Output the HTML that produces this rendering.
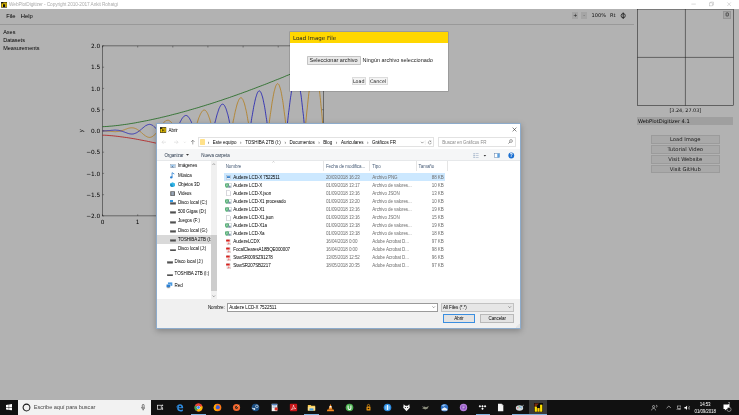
<!DOCTYPE html>
<html lang="es"><head><meta charset="utf-8"><title>WebPlotDigitizer</title>
<style>
html,body{margin:0;padding:0;}
body{width:739px;height:415px;overflow:hidden;background:#fff;position:relative;font-family:"Liberation Sans",sans-serif;color:#000;}
.abs{position:absolute;white-space:nowrap;}
.t{position:absolute;white-space:nowrap;line-height:1;}
/* title bar */
#titlebar{position:absolute;left:0;top:0;width:739px;height:9px;background:#fff;}
#titlebar .tt{left:9px;top:2.5px;font-size:4.75px;color:#ababab;letter-spacing:-0.08px;}
/* app */
#app{position:absolute;left:0;top:8.6px;width:739px;height:391px;background:#fff;overflow:hidden;}
#dim{position:absolute;left:0;top:8.6px;width:739px;height:391px;background:rgba(0,0,0,0.3);}
.plot{position:absolute;left:0;top:-8.6px;}
.menu{font-size:5.8px;}
.side{font-size:5.5px;}
.dv{font-family:"DejaVu Sans","Liberation Sans",sans-serif;}
.wbtn{position:absolute;left:650.5px;width:69.5px;height:8.4px;box-sizing:border-box;border:0.5px solid #dedede;background:#f2f2f2;color:#2a2a2a;font-size:5.25px;text-align:center;line-height:7px;}
#abrir .g{color:#6d6d6d}
#abrir .cv{display:inline-block;width:8.6px;text-align:center;color:#555;font-size:4.6px}
/* taskbar */
#taskbar{position:absolute;left:0;top:399.6px;width:739px;height:15.4px;background:#111;}
#wrap{position:absolute;left:0;top:0;width:739px;height:415px;overflow:hidden;filter:blur(0.3px);}
</style></head><body><div id="wrap">

<div id="titlebar">
  <svg class="abs" style="left:0.6px;top:2px" width="6.2" height="5.6" viewBox="0 0 13 12"><rect width="13" height="12" fill="#111"/><rect x="1" y="3" width="3" height="8" fill="#ffd400"/><rect x="5" y="1" width="3" height="4" fill="#ffd400"/><rect x="9" y="1" width="3" height="10" fill="#ffd400"/></svg>
  <div class="t tt">WebPlotDigitizer - Copyright 2010-2017 Ankit Rohatgi</div>
  <svg class="abs" style="left:686px;top:0" width="53" height="9" viewBox="0 0 53 9"><g stroke="#b5b5b5" stroke-width="0.5" fill="none"><path d="M5.4 4.1h4.4"/><rect x="23.5" y="2.9" width="3" height="3"/><path d="M24.5 2.9v-0.8h3v3h-1"/><path d="M41.3 2.4l3.6 3.6M44.9 2.4l-3.6 3.6"/></g></svg>
</div>

<div id="app">
  <div class="t menu" style="left:6.2px;top:5.7px">File</div>
  <div class="t menu" style="left:20.8px;top:5.7px">Help</div>
  <div class="abs" style="left:0;top:15.4px;width:634px;height:0.5px;background:#dcdcdc"></div>
  <div class="t side" style="left:3.2px;top:21px">Axes</div>
  <div class="t side" style="left:3.2px;top:29px">Datasets</div>
  <div class="t side" style="left:3.2px;top:37.8px">Measurements</div>
  <svg class="plot" width="739" height="415" viewBox="0 0 739 415">
<rect x="102.5" y="45.9" width="220.9" height="170.0" fill="none" stroke="#2a2a2a" stroke-width="0.5"/>
<g stroke="#222" stroke-width="0.4"><line x1="102.5" y1="215.9" x2="102.5" y2="214.3"/><line x1="102.5" y1="45.9" x2="102.5" y2="47.5"/><line x1="137.7" y1="215.9" x2="137.7" y2="214.3"/><line x1="137.7" y1="45.9" x2="137.7" y2="47.5"/><line x1="172.8" y1="215.9" x2="172.8" y2="214.3"/><line x1="172.8" y1="45.9" x2="172.8" y2="47.5"/><line x1="207.9" y1="215.9" x2="207.9" y2="214.3"/><line x1="207.9" y1="45.9" x2="207.9" y2="47.5"/><line x1="243.1" y1="215.9" x2="243.1" y2="214.3"/><line x1="243.1" y1="45.9" x2="243.1" y2="47.5"/><line x1="278.2" y1="215.9" x2="278.2" y2="214.3"/><line x1="278.2" y1="45.9" x2="278.2" y2="47.5"/><line x1="313.4" y1="215.9" x2="313.4" y2="214.3"/><line x1="313.4" y1="45.9" x2="313.4" y2="47.5"/><line x1="102.5" y1="215.9" x2="104.1" y2="215.9"/><line x1="323.4" y1="215.9" x2="321.8" y2="215.9"/><line x1="102.5" y1="194.7" x2="104.1" y2="194.7"/><line x1="323.4" y1="194.7" x2="321.8" y2="194.7"/><line x1="102.5" y1="173.4" x2="104.1" y2="173.4"/><line x1="323.4" y1="173.4" x2="321.8" y2="173.4"/><line x1="102.5" y1="152.2" x2="104.1" y2="152.2"/><line x1="323.4" y1="152.2" x2="321.8" y2="152.2"/><line x1="102.5" y1="130.9" x2="104.1" y2="130.9"/><line x1="323.4" y1="130.9" x2="321.8" y2="130.9"/><line x1="102.5" y1="109.7" x2="104.1" y2="109.7"/><line x1="323.4" y1="109.7" x2="321.8" y2="109.7"/><line x1="102.5" y1="88.4" x2="104.1" y2="88.4"/><line x1="323.4" y1="88.4" x2="321.8" y2="88.4"/><line x1="102.5" y1="67.2" x2="104.1" y2="67.2"/><line x1="323.4" y1="67.2" x2="321.8" y2="67.2"/><line x1="102.5" y1="45.9" x2="104.1" y2="45.9"/><line x1="323.4" y1="45.9" x2="321.8" y2="45.9"/></g>
<g font-family="'DejaVu Sans','Liberation Sans',sans-serif" font-size="5.8" fill="#000"><text x="100.3" y="218.1" text-anchor="end">−2.0</text><text x="100.3" y="196.8" text-anchor="end">−1.5</text><text x="100.3" y="175.6" text-anchor="end">−1.0</text><text x="100.3" y="154.3" text-anchor="end">−0.5</text><text x="100.3" y="133.1" text-anchor="end">0.0</text><text x="100.3" y="111.9" text-anchor="end">0.5</text><text x="100.3" y="90.6" text-anchor="end">1.0</text><text x="100.3" y="69.4" text-anchor="end">1.5</text><text x="100.3" y="48.1" text-anchor="end">2.0</text><text x="102.5" y="223.8" text-anchor="middle">0</text><text x="137.7" y="223.8" text-anchor="middle">1</text><text x="172.8" y="223.8" text-anchor="middle">2</text><text x="207.9" y="223.8" text-anchor="middle">3</text><text x="243.1" y="223.8" text-anchor="middle">4</text><text x="278.2" y="223.8" text-anchor="middle">5</text><text x="313.4" y="223.8" text-anchor="middle">6</text>
<text x="83.5" y="130.9" text-anchor="middle" transform="rotate(-90 83.5 130.9)">y</text></g>
<g fill="none" stroke-width="0.68">
<path d="M102.5,126.7 L104.3,126.6 L106.2,126.5 L108.0,126.4 L109.9,126.2 L111.7,126.1 L113.5,125.9 L115.4,125.7 L117.2,125.5 L119.1,125.3 L120.9,125.0 L122.7,124.8 L124.6,124.5 L126.4,124.3 L128.3,124.0 L130.1,123.7 L131.9,123.4 L133.8,123.1 L135.6,122.8 L137.5,122.4 L139.3,122.1 L141.1,121.7 L143.0,121.4 L144.8,121.0 L146.7,120.7 L148.5,120.3 L150.4,119.9 L152.2,119.5 L154.0,119.1 L155.9,118.7 L157.7,118.3 L159.6,117.9 L161.4,117.4 L163.2,117.0 L165.1,116.6 L166.9,116.1 L168.8,115.7 L170.6,115.2 L172.4,114.7 L174.3,114.2 L176.1,113.8 L178.0,113.3 L179.8,112.8 L181.6,112.3 L183.5,111.8 L185.3,111.3 L187.2,110.8 L189.0,110.2 L190.8,109.7 L192.7,109.2 L194.5,108.6 L196.4,108.1 L198.2,107.6 L200.0,107.0 L201.9,106.4 L203.7,105.9 L205.6,105.3 L207.4,104.7 L209.2,104.2 L211.1,103.6 L212.9,103.0 L214.8,102.4 L216.6,101.8 L218.4,101.2 L220.3,100.6 L222.1,100.0 L224.0,99.3 L225.8,98.7 L227.7,98.1 L229.5,97.5 L231.3,96.8 L233.2,96.2 L235.0,95.5 L236.9,94.9 L238.7,94.2 L240.5,93.6 L242.4,92.9 L244.2,92.2 L246.1,91.6 L247.9,90.9 L249.7,90.2 L251.6,89.5 L253.4,88.8 L255.3,88.1 L257.1,87.4 L258.9,86.7 L260.8,86.0 L262.6,85.3 L264.5,84.6 L266.3,83.9 L268.1,83.2 L270.0,82.4 L271.8,81.7 L273.7,81.0 L275.5,80.2 L277.3,79.5 L279.2,78.8 L281.0,78.0 L282.9,77.3 L284.7,76.5 L286.5,75.7 L288.4,75.0 L290.2,74.2 L292.1,73.4 L293.9,72.6 L295.7,71.9 L297.6,71.1 L299.4,70.3 L301.3,69.5 L303.1,68.7 L304.9,67.9 L306.8,67.1 L308.6,66.3 L310.5,65.5 L312.3,64.7 L314.2,63.9 L316.0,63.0 L317.8,62.2 L319.7,61.4 L321.5,60.5 L323.4,59.7" stroke="#008000"/>
<path d="M102.5,135.2 L104.3,135.2 L106.2,135.3 L108.0,135.4 L109.9,135.6 L111.7,135.7 L113.5,135.9 L115.4,136.1 L117.2,136.3 L119.1,136.5 L120.9,136.8 L122.7,137.0 L124.6,137.3 L126.4,137.5 L128.3,137.8 L130.1,138.1 L131.9,138.4 L133.8,138.7 L135.6,139.0 L137.5,139.4 L139.3,139.7 L141.1,140.1 L143.0,140.4 L144.8,140.8 L146.7,141.1 L148.5,141.5 L150.4,141.9 L152.2,142.3 L154.0,142.7 L155.9,143.1 L157.7,143.5 L159.6,143.9 L161.4,144.4 L163.2,144.8 L165.1,145.2 L166.9,145.7 L168.8,146.1 L170.6,146.6 L172.4,147.1 L174.3,147.6 L176.1,148.0 L178.0,148.5 L179.8,149.0 L181.6,149.5 L183.5,150.0 L185.3,150.5 L187.2,151.0 L189.0,151.6 L190.8,152.1 L192.7,152.6 L194.5,153.2 L196.4,153.7 L198.2,154.2 L200.0,154.8 L201.9,155.4 L203.7,155.9 L205.6,156.5 L207.4,157.1 L209.2,157.6 L211.1,158.2 L212.9,158.8 L214.8,159.4 L216.6,160.0 L218.4,160.6 L220.3,161.2 L222.1,161.8 L224.0,162.5 L225.8,163.1 L227.7,163.7 L229.5,164.3 L231.3,165.0 L233.2,165.6 L235.0,166.3 L236.9,166.9 L238.7,167.6 L240.5,168.2 L242.4,168.9 L244.2,169.6 L246.1,170.2 L247.9,170.9 L249.7,171.6 L251.6,172.3 L253.4,173.0 L255.3,173.7 L257.1,174.4 L258.9,175.1 L260.8,175.8 L262.6,176.5 L264.5,177.2 L266.3,177.9 L268.1,178.6 L270.0,179.4 L271.8,180.1 L273.7,180.8 L275.5,181.6 L277.3,182.3 L279.2,183.0 L281.0,183.8 L282.9,184.5 L284.7,185.3 L286.5,186.1 L288.4,186.8 L290.2,187.6 L292.1,188.4 L293.9,189.2 L295.7,189.9 L297.6,190.7 L299.4,191.5 L301.3,192.3 L303.1,193.1 L304.9,193.9 L306.8,194.7 L308.6,195.5 L310.5,196.3 L312.3,197.1 L314.2,197.9 L316.0,198.8 L317.8,199.6 L319.7,200.4 L321.5,201.3 L323.4,202.1" stroke="#ff0000"/>
<path d="M102.5,130.9 L102.8,130.9 L103.1,130.9 L103.4,130.9 L103.8,130.9 L104.1,130.9 L104.4,130.9 L104.7,130.9 L105.0,130.9 L105.3,130.9 L105.7,131.0 L106.0,131.0 L106.3,131.0 L106.6,131.0 L106.9,131.0 L107.2,131.1 L107.5,131.1 L107.9,131.1 L108.2,131.1 L108.5,131.2 L108.8,131.2 L109.1,131.2 L109.4,131.2 L109.8,131.3 L110.1,131.3 L110.4,131.3 L110.7,131.4 L111.0,131.4 L111.3,131.4 L111.6,131.5 L112.0,131.5 L112.3,131.5 L112.6,131.5 L112.9,131.6 L113.2,131.6 L113.5,131.6 L113.9,131.6 L114.2,131.6 L114.5,131.7 L114.8,131.7 L115.1,131.7 L115.4,131.7 L115.8,131.7 L116.1,131.6 L116.4,131.6 L116.7,131.6 L117.0,131.6 L117.3,131.6 L117.6,131.5 L118.0,131.5 L118.3,131.5 L118.6,131.4 L118.9,131.4 L119.2,131.3 L119.5,131.2 L119.9,131.2 L120.2,131.1 L120.5,131.0 L120.8,130.9 L121.1,130.8 L121.4,130.7 L121.7,130.7 L122.1,130.6 L122.4,130.5 L122.7,130.3 L123.0,130.2 L123.3,130.1 L123.6,130.0 L124.0,129.9 L124.3,129.8 L124.6,129.7 L124.9,129.5 L125.2,129.4 L125.5,129.3 L125.8,129.2 L126.2,129.1 L126.5,129.0 L126.8,128.8 L127.1,128.7 L127.4,128.6 L127.7,128.5 L128.1,128.4 L128.4,128.3 L128.7,128.2 L129.0,128.2 L129.3,128.1 L129.6,128.0 L129.9,128.0 L130.3,127.9 L130.6,127.9 L130.9,127.8 L131.2,127.8 L131.5,127.8 L131.8,127.8 L132.2,127.8 L132.5,127.8 L132.8,127.9 L133.1,127.9 L133.4,127.9 L133.7,128.0 L134.1,128.1 L134.4,128.2 L134.7,128.3 L135.0,128.4 L135.3,128.5 L135.6,128.6 L135.9,128.8 L136.3,128.9 L136.6,129.1 L136.9,129.2 L137.2,129.4 L137.5,129.6 L137.8,129.8 L138.2,130.0 L138.5,130.3 L138.8,130.5 L139.1,130.7 L139.4,131.0 L139.7,131.2 L140.0,131.5 L140.4,131.7 L140.7,132.0 L141.0,132.3 L141.3,132.5 L141.6,132.8 L141.9,133.1 L142.3,133.4 L142.6,133.6 L142.9,133.9 L143.2,134.2 L143.5,134.4 L143.8,134.7 L144.1,134.9 L144.5,135.2 L144.8,135.4 L145.1,135.6 L145.4,135.8 L145.7,136.1 L146.0,136.2 L146.4,136.4 L146.7,136.6 L147.0,136.7 L147.3,136.9 L147.6,137.0 L147.9,137.1 L148.2,137.2 L148.6,137.3 L148.9,137.3 L149.2,137.4 L149.5,137.4 L149.8,137.4 L150.1,137.3 L150.5,137.3 L150.8,137.2 L151.1,137.1 L151.4,137.0 L151.7,136.9 L152.0,136.8 L152.3,136.6 L152.7,136.4 L153.0,136.2 L153.3,136.0 L153.6,135.7 L153.9,135.4 L154.2,135.1 L154.6,134.8 L154.9,134.5 L155.2,134.2 L155.5,133.8 L155.8,133.4 L156.1,133.0 L156.5,132.6 L156.8,132.2 L157.1,131.8 L157.4,131.3 L157.7,130.9 L158.0,130.4 L158.3,130.0 L158.7,129.5 L159.0,129.0 L159.3,128.6 L159.6,128.1 L159.9,127.6 L160.2,127.2 L160.6,126.7 L160.9,126.2 L161.2,125.8 L161.5,125.3 L161.8,124.9 L162.1,124.5 L162.4,124.1 L162.8,123.7 L163.1,123.3 L163.4,122.9 L163.7,122.6 L164.0,122.2 L164.3,121.9 L164.7,121.6 L165.0,121.4 L165.3,121.1 L165.6,120.9 L165.9,120.8 L166.2,120.6 L166.5,120.5 L166.9,120.4 L167.2,120.3 L167.5,120.3 L167.8,120.3 L168.1,120.3 L168.4,120.3 L168.8,120.4 L169.1,120.6 L169.4,120.7 L169.7,120.9 L170.0,121.1 L170.3,121.4 L170.6,121.7 L171.0,122.0 L171.3,122.3 L171.6,122.7 L171.9,123.1 L172.2,123.6 L172.5,124.0 L172.9,124.5 L173.2,125.1 L173.5,125.6 L173.8,126.2 L174.1,126.8 L174.4,127.4 L174.8,128.0 L175.1,128.6 L175.4,129.3 L175.7,130.0 L176.0,130.7 L176.3,131.4 L176.6,132.1 L177.0,132.8 L177.3,133.5 L177.6,134.2 L177.9,134.9 L178.2,135.6 L178.5,136.3 L178.9,137.0 L179.2,137.7 L179.5,138.4 L179.8,139.0 L180.1,139.7 L180.4,140.3 L180.7,140.9 L181.1,141.5 L181.4,142.1 L181.7,142.6 L182.0,143.1 L182.3,143.6 L182.6,144.0 L183.0,144.4 L183.3,144.8 L183.6,145.1 L183.9,145.4 L184.2,145.7 L184.5,145.9 L184.8,146.1 L185.2,146.2 L185.5,146.3 L185.8,146.4 L186.1,146.4 L186.4,146.3 L186.7,146.2 L187.1,146.1 L187.4,145.9 L187.7,145.6 L188.0,145.4 L188.3,145.0 L188.6,144.7 L188.9,144.2 L189.3,143.8 L189.6,143.3 L189.9,142.7 L190.2,142.1 L190.5,141.5 L190.8,140.9 L191.2,140.2 L191.5,139.4 L191.8,138.6 L192.1,137.8 L192.4,137.0 L192.7,136.2 L193.1,135.3 L193.4,134.4 L193.7,133.4 L194.0,132.5 L194.3,131.5 L194.6,130.6 L194.9,129.6 L195.3,128.6 L195.6,127.6 L195.9,126.6 L196.2,125.7 L196.5,124.7 L196.8,123.7 L197.2,122.8 L197.5,121.8 L197.8,120.9 L198.1,120.0 L198.4,119.1 L198.7,118.2 L199.0,117.4 L199.4,116.6 L199.7,115.8 L200.0,115.1 L200.3,114.4 L200.6,113.8 L200.9,113.2 L201.3,112.6 L201.6,112.1 L201.9,111.7 L202.2,111.3 L202.5,110.9 L202.8,110.6 L203.1,110.4 L203.5,110.2 L203.8,110.1 L204.1,110.1 L204.4,110.1 L204.7,110.1 L205.0,110.3 L205.4,110.4 L205.7,110.7 L206.0,111.0 L206.3,111.4 L206.6,111.8 L206.9,112.3 L207.2,112.9 L207.6,113.5 L207.9,114.2 L208.2,114.9 L208.5,115.7 L208.8,116.5 L209.1,117.4 L209.5,118.3 L209.8,119.3 L210.1,120.3 L210.4,121.4 L210.7,122.4 L211.0,123.6 L211.3,124.7 L211.7,125.9 L212.0,127.1 L212.3,128.4 L212.6,129.6 L212.9,130.9 L213.2,132.2 L213.6,133.5 L213.9,134.8 L214.2,136.0 L214.5,137.3 L214.8,138.6 L215.1,139.9 L215.5,141.1 L215.8,142.4 L216.1,143.6 L216.4,144.7 L216.7,145.9 L217.0,147.0 L217.3,148.1 L217.7,149.1 L218.0,150.1 L218.3,151.0 L218.6,151.9 L218.9,152.8 L219.2,153.6 L219.6,154.3 L219.9,154.9 L220.2,155.5 L220.5,156.0 L220.8,156.5 L221.1,156.9 L221.4,157.2 L221.8,157.4 L222.1,157.6 L222.4,157.6 L222.7,157.6 L223.0,157.6 L223.3,157.4 L223.7,157.2 L224.0,156.9 L224.3,156.5 L224.6,156.0 L224.9,155.5 L225.2,154.8 L225.5,154.1 L225.9,153.4 L226.2,152.5 L226.5,151.6 L226.8,150.6 L227.1,149.6 L227.4,148.5 L227.8,147.3 L228.1,146.1 L228.4,144.8 L228.7,143.4 L229.0,142.1 L229.3,140.6 L229.6,139.2 L230.0,137.7 L230.3,136.2 L230.6,134.6 L230.9,133.0 L231.2,131.4 L231.5,129.8 L231.9,128.2 L232.2,126.6 L232.5,125.0 L232.8,123.4 L233.1,121.8 L233.4,120.2 L233.8,118.6 L234.1,117.1 L234.4,115.5 L234.7,114.1 L235.0,112.6 L235.3,111.2 L235.6,109.9 L236.0,108.6 L236.3,107.3 L236.6,106.1 L236.9,105.0 L237.2,104.0 L237.5,103.0 L237.9,102.1 L238.2,101.3 L238.5,100.5 L238.8,99.9 L239.1,99.3 L239.4,98.8 L239.7,98.4 L240.1,98.1 L240.4,97.9 L240.7,97.8 L241.0,97.8 L241.3,97.8 L241.6,98.0 L242.0,98.3 L242.3,98.7 L242.6,99.1 L242.9,99.7 L243.2,100.4 L243.5,101.1 L243.8,102.0 L244.2,102.9 L244.5,103.9 L244.8,105.0 L245.1,106.2 L245.4,107.5 L245.7,108.9 L246.1,110.3 L246.4,111.8 L246.7,113.3 L247.0,115.0 L247.3,116.6 L247.6,118.4 L247.9,120.2 L248.3,122.0 L248.6,123.8 L248.9,125.7 L249.2,127.7 L249.5,129.6 L249.8,131.6 L250.2,133.5 L250.5,135.5 L250.8,137.5 L251.1,139.4 L251.4,141.4 L251.7,143.3 L252.0,145.3 L252.4,147.1 L252.7,149.0 L253.0,150.8 L253.3,152.5 L253.6,154.3 L253.9,155.9 L254.3,157.5 L254.6,159.0 L254.9,160.5 L255.2,161.8 L255.5,163.1 L255.8,164.3 L256.2,165.4 L256.5,166.4 L256.8,167.4 L257.1,168.2 L257.4,168.9 L257.7,169.5 L258.0,170.0 L258.4,170.4 L258.7,170.7 L259.0,170.8 L259.3,170.9 L259.6,170.8 L259.9,170.6 L260.3,170.3 L260.6,169.9 L260.9,169.3 L261.2,168.7 L261.5,167.9 L261.8,167.0 L262.1,166.0 L262.5,164.9 L262.8,163.7 L263.1,162.4 L263.4,161.0 L263.7,159.5 L264.0,157.9 L264.4,156.2 L264.7,154.4 L265.0,152.6 L265.3,150.6 L265.6,148.6 L265.9,146.6 L266.2,144.5 L266.6,142.3 L266.9,140.1 L267.2,137.8 L267.5,135.5 L267.8,133.2 L268.1,130.9 L268.5,128.6 L268.8,126.2 L269.1,123.8 L269.4,121.5 L269.7,119.2 L270.0,116.9 L270.3,114.6 L270.7,112.3 L271.0,110.1 L271.3,108.0 L271.6,105.9 L271.9,103.8 L272.2,101.8 L272.6,99.9 L272.9,98.1 L273.2,96.4 L273.5,94.7 L273.8,93.2 L274.1,91.7 L274.5,90.4 L274.8,89.2 L275.1,88.1 L275.4,87.1 L275.7,86.2 L276.0,85.5 L276.3,84.8 L276.7,84.3 L277.0,84.0 L277.3,83.8 L277.6,83.7 L277.9,83.7 L278.2,83.9 L278.6,84.3 L278.9,84.7 L279.2,85.3 L279.5,86.1 L279.8,87.0 L280.1,88.0 L280.4,89.1 L280.8,90.4 L281.1,91.8 L281.4,93.3 L281.7,94.9 L282.0,96.7 L282.3,98.5 L282.7,100.5 L283.0,102.6 L283.3,104.7 L283.6,107.0 L283.9,109.3 L284.2,111.7 L284.5,114.1 L284.9,116.7 L285.2,119.3 L285.5,121.9 L285.8,124.6 L286.1,127.3 L286.4,130.0 L286.8,132.7 L287.1,135.5 L287.4,138.2 L287.7,141.0 L288.0,143.7 L288.3,146.4 L288.6,149.1 L289.0,151.7 L289.3,154.3 L289.6,156.9 L289.9,159.3 L290.2,161.7 L290.5,164.1 L290.9,166.3 L291.2,168.4 L291.5,170.5 L291.8,172.4 L292.1,174.3 L292.4,176.0 L292.7,177.6 L293.1,179.0 L293.4,180.4 L293.7,181.5 L294.0,182.6 L294.3,183.5 L294.6,184.3 L295.0,184.9 L295.3,185.3 L295.6,185.6 L295.9,185.7 L296.2,185.7 L296.5,185.5 L296.9,185.2 L297.2,184.7 L297.5,184.0 L297.8,183.2 L298.1,182.2 L298.4,181.1 L298.7,179.8 L299.1,178.4 L299.4,176.8 L299.7,175.1 L300.0,173.2 L300.3,171.2 L300.6,169.1 L301.0,166.8 L301.3,164.5 L301.6,162.0 L301.9,159.5 L302.2,156.8 L302.5,154.1 L302.8,151.2 L303.2,148.3 L303.5,145.4 L303.8,142.3 L304.1,139.3 L304.4,136.1 L304.7,133.0 L305.1,129.8 L305.4,126.7 L305.7,123.5 L306.0,120.3 L306.3,117.2 L306.6,114.0 L306.9,111.0 L307.3,107.9 L307.6,104.9 L307.9,102.0 L308.2,99.1 L308.5,96.3 L308.8,93.6 L309.2,91.0 L309.5,88.5 L309.8,86.2 L310.1,83.9 L310.4,81.8 L310.7,79.8 L311.0,77.9 L311.4,76.2 L311.7,74.6 L312.0,73.2 L312.3,72.0 L312.6,70.9 L312.9,70.0 L313.3,69.2 L313.6,68.7 L313.9,68.3 L314.2,68.1 L314.5,68.1 L314.8,68.2 L315.2,68.6 L315.5,69.1 L315.8,69.8 L316.1,70.7 L316.4,71.8 L316.7,73.0 L317.0,74.5 L317.4,76.1 L317.7,77.8 L318.0,79.7 L318.3,81.8 L318.6,84.1 L318.9,86.4 L319.3,89.0 L319.6,91.6 L319.9,94.4 L320.2,97.3 L320.5,100.3 L320.8,103.4 L321.1,106.6 L321.5,109.9 L321.8,113.3 L322.1,116.7 L322.4,120.2 L322.7,123.7 L323.0,127.3 L323.4,130.9" stroke="#ffa500"/>
<path d="M102.5,130.9 L102.8,130.9 L103.1,130.9 L103.4,130.9 L103.8,130.9 L104.1,130.9 L104.4,130.9 L104.7,130.9 L105.0,130.9 L105.3,130.9 L105.7,130.8 L106.0,130.8 L106.3,130.8 L106.6,130.8 L106.9,130.8 L107.2,130.7 L107.5,130.7 L107.9,130.7 L108.2,130.7 L108.5,130.6 L108.8,130.6 L109.1,130.6 L109.4,130.6 L109.8,130.5 L110.1,130.5 L110.4,130.5 L110.7,130.4 L111.0,130.4 L111.3,130.4 L111.6,130.3 L112.0,130.3 L112.3,130.3 L112.6,130.3 L112.9,130.2 L113.2,130.2 L113.5,130.2 L113.9,130.2 L114.2,130.2 L114.5,130.1 L114.8,130.1 L115.1,130.1 L115.4,130.1 L115.8,130.1 L116.1,130.2 L116.4,130.2 L116.7,130.2 L117.0,130.2 L117.3,130.2 L117.6,130.3 L118.0,130.3 L118.3,130.3 L118.6,130.4 L118.9,130.4 L119.2,130.5 L119.5,130.6 L119.9,130.6 L120.2,130.7 L120.5,130.8 L120.8,130.9 L121.1,131.0 L121.4,131.1 L121.7,131.1 L122.1,131.2 L122.4,131.3 L122.7,131.5 L123.0,131.6 L123.3,131.7 L123.6,131.8 L124.0,131.9 L124.3,132.0 L124.6,132.1 L124.9,132.3 L125.2,132.4 L125.5,132.5 L125.8,132.6 L126.2,132.7 L126.5,132.8 L126.8,133.0 L127.1,133.1 L127.4,133.2 L127.7,133.3 L128.1,133.4 L128.4,133.5 L128.7,133.6 L129.0,133.6 L129.3,133.7 L129.6,133.8 L129.9,133.8 L130.3,133.9 L130.6,133.9 L130.9,134.0 L131.2,134.0 L131.5,134.0 L131.8,134.0 L132.2,134.0 L132.5,134.0 L132.8,133.9 L133.1,133.9 L133.4,133.9 L133.7,133.8 L134.1,133.7 L134.4,133.6 L134.7,133.5 L135.0,133.4 L135.3,133.3 L135.6,133.2 L135.9,133.0 L136.3,132.9 L136.6,132.7 L136.9,132.6 L137.2,132.4 L137.5,132.2 L137.8,132.0 L138.2,131.8 L138.5,131.5 L138.8,131.3 L139.1,131.1 L139.4,130.8 L139.7,130.6 L140.0,130.3 L140.4,130.1 L140.7,129.8 L141.0,129.5 L141.3,129.3 L141.6,129.0 L141.9,128.7 L142.3,128.4 L142.6,128.2 L142.9,127.9 L143.2,127.6 L143.5,127.4 L143.8,127.1 L144.1,126.9 L144.5,126.6 L144.8,126.4 L145.1,126.2 L145.4,126.0 L145.7,125.7 L146.0,125.6 L146.4,125.4 L146.7,125.2 L147.0,125.1 L147.3,124.9 L147.6,124.8 L147.9,124.7 L148.2,124.6 L148.6,124.5 L148.9,124.5 L149.2,124.4 L149.5,124.4 L149.8,124.4 L150.1,124.5 L150.5,124.5 L150.8,124.6 L151.1,124.7 L151.4,124.8 L151.7,124.9 L152.0,125.0 L152.3,125.2 L152.7,125.4 L153.0,125.6 L153.3,125.8 L153.6,126.1 L153.9,126.4 L154.2,126.7 L154.6,127.0 L154.9,127.3 L155.2,127.6 L155.5,128.0 L155.8,128.4 L156.1,128.8 L156.5,129.2 L156.8,129.6 L157.1,130.0 L157.4,130.5 L157.7,130.9 L158.0,131.4 L158.3,131.8 L158.7,132.3 L159.0,132.8 L159.3,133.2 L159.6,133.7 L159.9,134.2 L160.2,134.6 L160.6,135.1 L160.9,135.6 L161.2,136.0 L161.5,136.5 L161.8,136.9 L162.1,137.3 L162.4,137.7 L162.8,138.1 L163.1,138.5 L163.4,138.9 L163.7,139.2 L164.0,139.6 L164.3,139.9 L164.7,140.2 L165.0,140.4 L165.3,140.7 L165.6,140.9 L165.9,141.0 L166.2,141.2 L166.5,141.3 L166.9,141.4 L167.2,141.5 L167.5,141.5 L167.8,141.5 L168.1,141.5 L168.4,141.5 L168.8,141.4 L169.1,141.2 L169.4,141.1 L169.7,140.9 L170.0,140.7 L170.3,140.4 L170.6,140.1 L171.0,139.8 L171.3,139.5 L171.6,139.1 L171.9,138.7 L172.2,138.2 L172.5,137.8 L172.9,137.3 L173.2,136.7 L173.5,136.2 L173.8,135.6 L174.1,135.0 L174.4,134.4 L174.8,133.8 L175.1,133.2 L175.4,132.5 L175.7,131.8 L176.0,131.1 L176.3,130.4 L176.6,129.7 L177.0,129.0 L177.3,128.3 L177.6,127.6 L177.9,126.9 L178.2,126.2 L178.5,125.5 L178.9,124.8 L179.2,124.1 L179.5,123.4 L179.8,122.8 L180.1,122.1 L180.4,121.5 L180.7,120.9 L181.1,120.3 L181.4,119.7 L181.7,119.2 L182.0,118.7 L182.3,118.2 L182.6,117.8 L183.0,117.4 L183.3,117.0 L183.6,116.7 L183.9,116.4 L184.2,116.1 L184.5,115.9 L184.8,115.7 L185.2,115.6 L185.5,115.5 L185.8,115.4 L186.1,115.4 L186.4,115.5 L186.7,115.6 L187.1,115.7 L187.4,115.9 L187.7,116.2 L188.0,116.4 L188.3,116.8 L188.6,117.1 L188.9,117.6 L189.3,118.0 L189.6,118.5 L189.9,119.1 L190.2,119.7 L190.5,120.3 L190.8,120.9 L191.2,121.6 L191.5,122.4 L191.8,123.2 L192.1,124.0 L192.4,124.8 L192.7,125.6 L193.1,126.5 L193.4,127.4 L193.7,128.4 L194.0,129.3 L194.3,130.3 L194.6,131.2 L194.9,132.2 L195.3,133.2 L195.6,134.2 L195.9,135.2 L196.2,136.1 L196.5,137.1 L196.8,138.1 L197.2,139.0 L197.5,140.0 L197.8,140.9 L198.1,141.8 L198.4,142.7 L198.7,143.6 L199.0,144.4 L199.4,145.2 L199.7,146.0 L200.0,146.7 L200.3,147.4 L200.6,148.0 L200.9,148.6 L201.3,149.2 L201.6,149.7 L201.9,150.1 L202.2,150.5 L202.5,150.9 L202.8,151.2 L203.1,151.4 L203.5,151.6 L203.8,151.7 L204.1,151.7 L204.4,151.7 L204.7,151.7 L205.0,151.5 L205.4,151.4 L205.7,151.1 L206.0,150.8 L206.3,150.4 L206.6,150.0 L206.9,149.5 L207.2,148.9 L207.6,148.3 L207.9,147.6 L208.2,146.9 L208.5,146.1 L208.8,145.3 L209.1,144.4 L209.5,143.5 L209.8,142.5 L210.1,141.5 L210.4,140.4 L210.7,139.4 L211.0,138.2 L211.3,137.1 L211.7,135.9 L212.0,134.7 L212.3,133.4 L212.6,132.2 L212.9,130.9 L213.2,129.6 L213.6,128.3 L213.9,127.0 L214.2,125.8 L214.5,124.5 L214.8,123.2 L215.1,121.9 L215.5,120.7 L215.8,119.4 L216.1,118.2 L216.4,117.1 L216.7,115.9 L217.0,114.8 L217.3,113.7 L217.7,112.7 L218.0,111.7 L218.3,110.8 L218.6,109.9 L218.9,109.0 L219.2,108.2 L219.6,107.5 L219.9,106.9 L220.2,106.3 L220.5,105.8 L220.8,105.3 L221.1,104.9 L221.4,104.6 L221.8,104.4 L222.1,104.2 L222.4,104.2 L222.7,104.2 L223.0,104.2 L223.3,104.4 L223.7,104.6 L224.0,104.9 L224.3,105.3 L224.6,105.8 L224.9,106.3 L225.2,107.0 L225.5,107.7 L225.9,108.4 L226.2,109.3 L226.5,110.2 L226.8,111.2 L227.1,112.2 L227.4,113.3 L227.8,114.5 L228.1,115.7 L228.4,117.0 L228.7,118.4 L229.0,119.7 L229.3,121.2 L229.6,122.6 L230.0,124.1 L230.3,125.6 L230.6,127.2 L230.9,128.8 L231.2,130.4 L231.5,132.0 L231.9,133.6 L232.2,135.2 L232.5,136.8 L232.8,138.4 L233.1,140.0 L233.4,141.6 L233.8,143.2 L234.1,144.7 L234.4,146.3 L234.7,147.7 L235.0,149.2 L235.3,150.6 L235.6,151.9 L236.0,153.2 L236.3,154.5 L236.6,155.7 L236.9,156.8 L237.2,157.8 L237.5,158.8 L237.9,159.7 L238.2,160.5 L238.5,161.3 L238.8,161.9 L239.1,162.5 L239.4,163.0 L239.7,163.4 L240.1,163.7 L240.4,163.9 L240.7,164.0 L241.0,164.0 L241.3,164.0 L241.6,163.8 L242.0,163.5 L242.3,163.1 L242.6,162.7 L242.9,162.1 L243.2,161.4 L243.5,160.7 L243.8,159.8 L244.2,158.9 L244.5,157.9 L244.8,156.8 L245.1,155.6 L245.4,154.3 L245.7,152.9 L246.1,151.5 L246.4,150.0 L246.7,148.5 L247.0,146.8 L247.3,145.2 L247.6,143.4 L247.9,141.6 L248.3,139.8 L248.6,138.0 L248.9,136.1 L249.2,134.1 L249.5,132.2 L249.8,130.2 L250.2,128.3 L250.5,126.3 L250.8,124.3 L251.1,122.4 L251.4,120.4 L251.7,118.5 L252.0,116.5 L252.4,114.7 L252.7,112.8 L253.0,111.0 L253.3,109.3 L253.6,107.5 L253.9,105.9 L254.3,104.3 L254.6,102.8 L254.9,101.3 L255.2,100.0 L255.5,98.7 L255.8,97.5 L256.2,96.4 L256.5,95.4 L256.8,94.4 L257.1,93.6 L257.4,92.9 L257.7,92.3 L258.0,91.8 L258.4,91.4 L258.7,91.1 L259.0,91.0 L259.3,90.9 L259.6,91.0 L259.9,91.2 L260.3,91.5 L260.6,91.9 L260.9,92.5 L261.2,93.1 L261.5,93.9 L261.8,94.8 L262.1,95.8 L262.5,96.9 L262.8,98.1 L263.1,99.4 L263.4,100.8 L263.7,102.3 L264.0,103.9 L264.4,105.6 L264.7,107.4 L265.0,109.2 L265.3,111.2 L265.6,113.2 L265.9,115.2 L266.2,117.3 L266.6,119.5 L266.9,121.7 L267.2,124.0 L267.5,126.3 L267.8,128.6 L268.1,130.9 L268.5,133.2 L268.8,135.6 L269.1,138.0 L269.4,140.3 L269.7,142.6 L270.0,144.9 L270.3,147.2 L270.7,149.5 L271.0,151.7 L271.3,153.8 L271.6,155.9 L271.9,158.0 L272.2,160.0 L272.6,161.9 L272.9,163.7 L273.2,165.4 L273.5,167.1 L273.8,168.6 L274.1,170.1 L274.5,171.4 L274.8,172.6 L275.1,173.7 L275.4,174.7 L275.7,175.6 L276.0,176.3 L276.3,177.0 L276.7,177.5 L277.0,177.8 L277.3,178.0 L277.6,178.1 L277.9,178.1 L278.2,177.9 L278.6,177.5 L278.9,177.1 L279.2,176.5 L279.5,175.7 L279.8,174.8 L280.1,173.8 L280.4,172.7 L280.8,171.4 L281.1,170.0 L281.4,168.5 L281.7,166.9 L282.0,165.1 L282.3,163.3 L282.7,161.3 L283.0,159.2 L283.3,157.1 L283.6,154.8 L283.9,152.5 L284.2,150.1 L284.5,147.7 L284.9,145.1 L285.2,142.5 L285.5,139.9 L285.8,137.2 L286.1,134.5 L286.4,131.8 L286.8,129.1 L287.1,126.3 L287.4,123.6 L287.7,120.8 L288.0,118.1 L288.3,115.4 L288.6,112.7 L289.0,110.1 L289.3,107.5 L289.6,104.9 L289.9,102.5 L290.2,100.1 L290.5,97.7 L290.9,95.5 L291.2,93.4 L291.5,91.3 L291.8,89.4 L292.1,87.5 L292.4,85.8 L292.7,84.2 L293.1,82.8 L293.4,81.4 L293.7,80.3 L294.0,79.2 L294.3,78.3 L294.6,77.5 L295.0,76.9 L295.3,76.5 L295.6,76.2 L295.9,76.1 L296.2,76.1 L296.5,76.3 L296.9,76.6 L297.2,77.1 L297.5,77.8 L297.8,78.6 L298.1,79.6 L298.4,80.7 L298.7,82.0 L299.1,83.4 L299.4,85.0 L299.7,86.7 L300.0,88.6 L300.3,90.6 L300.6,92.7 L301.0,95.0 L301.3,97.3 L301.6,99.8 L301.9,102.3 L302.2,105.0 L302.5,107.7 L302.8,110.6 L303.2,113.5 L303.5,116.4 L303.8,119.5 L304.1,122.5 L304.4,125.7 L304.7,128.8 L305.1,132.0 L305.4,135.1 L305.7,138.3 L306.0,141.5 L306.3,144.6 L306.6,147.8 L306.9,150.8 L307.3,153.9 L307.6,156.9 L307.9,159.8 L308.2,162.7 L308.5,165.5 L308.8,168.2 L309.2,170.8 L309.5,173.3 L309.8,175.6 L310.1,177.9 L310.4,180.0 L310.7,182.0 L311.0,183.9 L311.4,185.6 L311.7,187.2 L312.0,188.6 L312.3,189.8 L312.6,190.9 L312.9,191.8 L313.3,192.6 L313.6,193.1 L313.9,193.5 L314.2,193.7 L314.5,193.7 L314.8,193.6 L315.2,193.2 L315.5,192.7 L315.8,192.0 L316.1,191.1 L316.4,190.0 L316.7,188.8 L317.0,187.3 L317.4,185.7 L317.7,184.0 L318.0,182.1 L318.3,180.0 L318.6,177.7 L318.9,175.4 L319.3,172.8 L319.6,170.2 L319.9,167.4 L320.2,164.5 L320.5,161.5 L320.8,158.4 L321.1,155.2 L321.5,151.9 L321.8,148.5 L322.1,145.1 L322.4,141.6 L322.7,138.1 L323.0,134.5 L323.4,130.9" stroke="#0000ff"/>
</g></svg>
  <!-- zoom toolbar -->
  <div class="abs" style="left:571.6px;top:3.4px;width:6.8px;height:6.8px;background:#ededed"></div>
  <div class="abs" style="left:580.6px;top:3.4px;width:6.8px;height:6.8px;background:#ededed"></div>
  <div class="t dv" style="left:573.2px;top:4.2px;font-size:5px;color:#222">+</div>
  <div class="t dv" style="left:583.2px;top:4.2px;font-size:5px;color:#222">-</div>
  <div class="t dv" style="left:591.6px;top:4.4px;font-size:5.1px;color:#222">100%</div>
  <div class="t dv" style="left:610px;top:4.4px;font-size:5.1px;color:#222">Rt</div>
  <svg class="abs" style="left:620.2px;top:3.1px" width="6.4" height="7.4" viewBox="0 0 6.4 7.4"><ellipse cx="3.2" cy="3.7" rx="2.1" ry="2.1" fill="none" stroke="#1a1a1a" stroke-width="0.75"/><path d="M3.2 0.5v6.4" stroke="#1a1a1a" stroke-width="0.85"/></svg>
  <!-- zoom box -->
  <svg class="abs" style="left:630px;top:-8.6px" width="109" height="120" viewBox="630 0 109 120"><g stroke="#1a1a1a" stroke-width="0.5" fill="none"><rect x="637.4" y="9.1" width="96" height="96.4"/><path d="M685.4 9.1v96.4M637.4 57.4h96"/></g></svg>
  <div class="abs" style="left:723.3px;top:2.6px;width:7.6px;height:7.4px;background:#ececec;border:0.5px solid #d6d6d6;box-sizing:border-box;"></div>
  <svg class="abs" style="left:724.9px;top:3.8px" width="4.6" height="5" viewBox="0 0 4.6 5"><rect x="1.1" y="0.9" width="2.3" height="3.1" rx="0.5" fill="none" stroke="#333" stroke-width="0.65"/></svg>
  <div class="t dv" style="left:637.3px;width:96px;text-align:center;top:99px;font-size:4.9px;color:#222">[3.24, 27.03]</div>
  <div class="abs dv" style="left:637px;top:108.5px;width:96.4px;height:8px;background:#e4e4e4;font-size:5.1px;line-height:8px;text-indent:1px;color:#111">WebPlotDigitizer 4.1</div>
  <div class="wbtn dv" style="top:126.8px">Load Image</div>
  <div class="wbtn dv" style="top:136.8px">Tutorial Video</div>
  <div class="wbtn dv" style="top:146.7px">Visit Website</div>
  <div class="wbtn dv" style="top:156.5px">Visit GitHub</div>
</div>
<div id="dim"></div>

<div id="loaddlg" class="abs" style="left:290.4px;top:32.1px;width:158px;height:58.8px;background:#fff;box-shadow:0 0 0 0.6px rgba(0,0,0,0.22);">
  <div class="abs dv" style="left:0;top:0;width:158px;height:11.4px;background:#ffd700;font-size:5.5px;line-height:12px;text-indent:2.6px;color:#222">Load Image File</div>
  <div class="abs" style="left:16.2px;top:24.4px;width:54px;height:8.3px;box-sizing:border-box;border:0.45px solid #c4c4c4;border-radius:0.8px;background:#e9e9e9;font-size:5.5px;line-height:7.4px;text-align:center;color:#222;">Seleccionar archivo</div>
  <div class="t" style="left:72.2px;top:25.8px;font-size:5.5px;color:#222">Ningún archivo seleccionado</div>
  <div class="abs dv" style="left:61.4px;top:45px;width:13.8px;height:8px;box-sizing:border-box;border:0.45px solid #dcdcdc;background:#f4f4f4;font-size:4.8px;line-height:7.2px;text-align:center;color:#222;">Load</div>
  <div class="abs dv" style="left:78.2px;top:45px;width:19px;height:8px;box-sizing:border-box;border:0.45px solid #dcdcdc;background:#f4f4f4;font-size:4.8px;line-height:7.2px;text-align:center;color:#222;">Cancel</div>
</div>
<div id="abrir" class="abs" style="left:157.3px;top:124.3px;width:362.6px;height:203.6px;overflow:hidden;background:#fff;box-shadow:0 0 0 1px #8dabcb,0 2px 6px 1.2px rgba(0,0,0,0.26);font-size:4.5px;letter-spacing:-0.07px;">
<svg class="abs" style="left:3.2px;top:2.6px" width="6.2" height="6" viewBox="0 0 13 12"><rect width="13" height="12" fill="#111"/><rect x="1" y="3.5" width="3" height="7.5" fill="#ffd400"/><rect x="5" y="1" width="3" height="4.5" fill="#ffd400"/><rect x="9" y="1" width="3" height="10" fill="#ffd400"/><rect x="5" y="7" width="3" height="4" fill="#ffd400"/></svg>
<div class="t" style="left:11.3px;top:4.7px;font-size:4.5px">Abrir</div>
<svg class="abs" style="left:355px;top:3px" width="5" height="5" viewBox="0 0 5 5"><path d="M0.6 0.6l3.8 3.8M4.4 0.6l-3.8 3.8" stroke="#222" stroke-width="0.55"/></svg>
<svg class="abs" style="left:4px;top:14.6px" width="40" height="6.4" viewBox="0 0 40 6.4"><g fill="none" stroke-width="0.55"><path d="M5 3.2h-4M2.6 1.5l-1.7 1.7 1.7 1.7" stroke="#d3d3d3"/><path d="M13 3.2h4M15.4 1.5l1.7 1.7-1.7 1.7" stroke="#d3d3d3"/><path d="M23 2.8l0.8 0.8 0.8-0.8" stroke="#bdbdbd" stroke-width="0.4"/><path d="M31.8 5.4v-4.2M30 3l1.8-1.8 1.8 1.8" stroke="#555"/></g></svg>
<div class="abs" style="left:40.8px;top:13.2px;width:235.6px;height:9.2px;box-sizing:border-box;border:0.5px solid #e2e2e2;"></div>
<div class="abs" style="left:42.9px;top:14.8px;width:4.6px;height:5.8px;background:#ffe18a;border-radius:0.4px"></div>
<div class="t" style="left:46.9px;top:16.7px;font-size:4.5px;letter-spacing:0"><span class="cv">›</span>Este equipo<span class="cv">›</span>TOSHIBA 2TB (I:)<span class="cv">›</span>Documentos<span class="cv">›</span>Blog<span class="cv">›</span>Auriculares<span class="cv">›</span>Gráficos FR</div>
<svg class="abs" style="left:262.5px;top:15.4px" width="14" height="5" viewBox="0 0 14 5"><path d="M1 1.8l1.3 1.3 1.3-1.3" stroke="#444" stroke-width="0.5" fill="none"/><path d="M5.4 0v5" stroke="#e2e2e2" stroke-width="0.4"/><path d="M11.3 2.6a1.5 1.5 0 1 1-0.5-1.2M10.9 0.5v1h-1" stroke="#555" stroke-width="0.45" fill="none"/></svg>
<div class="abs" style="left:280.8px;top:13.2px;width:78.3px;height:9.2px;box-sizing:border-box;border:0.5px solid #e2e2e2;"></div>
<div class="t" style="left:285px;top:16.7px;font-size:4.5px;color:#8a8a8a">Buscar en Gráficos FR</div>
<svg class="abs" style="left:350.6px;top:15.2px" width="5" height="5" viewBox="0 0 5 5"><circle cx="3" cy="2" r="1.4" fill="none" stroke="#444" stroke-width="0.5"/><path d="M2 3l-1.6 1.6" stroke="#444" stroke-width="0.6"/></svg>
<div class="abs" style="left:0;top:24.8px;width:363.2px;height:12.2px;background:#f5f6f7;border-bottom:0.4px solid #e6e8ea;box-sizing:border-box"></div>
<div class="t" style="left:7.1px;top:29.5px;font-size:4.5px;color:#26364a">Organizar</div>
<svg class="abs" style="left:29px;top:30.2px" width="3" height="2" viewBox="0 0 3 2"><path d="M0 0h3l-1.5 1.8z" fill="#333"/></svg>
<div class="t" style="left:44px;top:29.5px;font-size:4.5px;color:#26364a">Nueva carpeta</div>
<svg class="abs" style="left:315px;top:27.6px" width="45" height="7" viewBox="0 0 45 7"><g fill="#9fb0c6"><rect x="1.4" y="1.2" width="1.4" height="1.1"/><rect x="1.4" y="3" width="1.4" height="1.1"/><rect x="1.4" y="4.8" width="1.4" height="1.1"/><rect x="3.6" y="1.4" width="3" height="0.6"/><rect x="3.6" y="3.2" width="3" height="0.6"/><rect x="3.6" y="5" width="3" height="0.6"/></g><path d="M11.6 3h2.6l-1.3 1.5z" fill="#333"/><rect x="22.3" y="1.3" width="5.4" height="4.4" fill="#fff" stroke="#5d7ea8" stroke-width="0.5"/><rect x="25.3" y="1.5" width="2.2" height="4" fill="#5aa0e0"/><circle cx="39.3" cy="3.5" r="2.9" fill="#1b6fd0"/><text x="39.3" y="5.3" font-size="4.9" font-weight="bold" text-anchor="middle" fill="#fff" font-family="Liberation Sans, sans-serif">?</text></svg>
<div class="abs" style="left:0;top:110.9px;width:53.8px;height:8.5px;background:#d9d9d9"></div>
<svg class="abs" style="left:12.8px;top:39.4px" width="5.6" height="4.4" viewBox="0 0 5.6 4.4"><rect x="0.2" y="0.2" width="5.2" height="4" fill="#f2f7fc" stroke="#8195ab" stroke-width="0.4"/><rect x="0.8" y="0.8" width="4" height="1.5" fill="#9cc8ee"/><path d="M0.8 3.400l1.500-1.300 1.100 0.800 0.800-0.500 0.600 1z" fill="#3c5f86"/></svg>
<div class="t" style="left:20.6px;top:40.1px;">Imágenes</div>
<svg class="abs" style="left:13.2px;top:47.6px" width="5.2" height="6.9" viewBox="0 0 4.5 6"><path d="M1.8 4.6V0.6l2 1.2" stroke="#2a7fd0" stroke-width="0.7" fill="none"/><ellipse cx="1.1" cy="4.7" rx="1.1" ry="0.9" fill="#2a7fd0"/></svg>
<div class="t" style="left:20.6px;top:49.5px;">Música</div>
<svg class="abs" style="left:13.0px;top:57.4px" width="5.2" height="5.6" viewBox="0 0 5.2 5.6"><path d="M2.6 0.2l2.4 1.3v2.6l-2.4 1.3-2.4-1.3v-2.6z" fill="#35b6e6"/><path d="M2.6 2.8v2.6l-2.4-1.3v-2.6z" fill="#1d8fc4"/></svg>
<div class="t" style="left:20.6px;top:58.7px;">Objetos 3D</div>
<svg class="abs" style="left:13.0px;top:66.7px" width="5.2" height="5.2" viewBox="0 0 5.2 5.2"><rect x="0.3" y="0.3" width="4.6" height="4.6" fill="#555"/><rect x="1.3" y="0.9" width="2.6" height="3.4" fill="#9aa7b8"/></svg>
<div class="t" style="left:20.6px;top:67.8px;">Vídeos</div>
<svg class="abs" style="left:12.6px;top:77.9px" width="6" height="2.8" viewBox="0 0 12 5.6"><rect x="0.3" y="0.6" width="11.4" height="4.4" rx="0.6" fill="#4a4a4a"/><rect x="0.3" y="0.6" width="11.4" height="1.6" fill="#9a9a9a"/></svg>
<div class="abs" style="left:13.0px;top:75.3px;width:2.6px;height:2.4px;background:#2f9be8"></div>
<div class="t" style="left:20.6px;top:76.4px;">Disco local (C:)</div>
<svg class="abs" style="left:12.6px;top:87.2px" width="6" height="2.8" viewBox="0 0 12 5.6"><rect x="0.3" y="0.6" width="11.4" height="4.4" rx="0.6" fill="#4a4a4a"/><rect x="0.3" y="0.6" width="11.4" height="1.6" fill="#9a9a9a"/></svg>
<div class="t" style="left:20.6px;top:85.7px;">500 Gigas (D:)</div>
<svg class="abs" style="left:12.6px;top:96.6px" width="6" height="2.8" viewBox="0 0 12 5.6"><rect x="0.3" y="0.6" width="11.4" height="4.4" rx="0.6" fill="#4a4a4a"/><rect x="0.3" y="0.6" width="11.4" height="1.6" fill="#9a9a9a"/></svg>
<div class="t" style="left:20.6px;top:95.1px;">Juegos (F:)</div>
<svg class="abs" style="left:12.6px;top:106.0px" width="6" height="2.8" viewBox="0 0 12 5.6"><rect x="0.3" y="0.6" width="11.4" height="4.4" rx="0.6" fill="#4a4a4a"/><rect x="0.3" y="0.6" width="11.4" height="1.6" fill="#9a9a9a"/></svg>
<div class="t" style="left:20.6px;top:104.5px;">Disco local (G:)</div>
<svg class="abs" style="left:12.6px;top:115.2px" width="6" height="2.8" viewBox="0 0 12 5.6"><rect x="0.3" y="0.6" width="11.4" height="4.4" rx="0.6" fill="#4a4a4a"/><rect x="0.3" y="0.6" width="11.4" height="1.6" fill="#9a9a9a"/></svg>
<div class="t" style="left:20.6px;top:113.7px;">TOSHIBA 2TB (I:)</div>
<svg class="abs" style="left:12.6px;top:124.4px" width="6" height="2.8" viewBox="0 0 12 5.6"><rect x="0.3" y="0.6" width="11.4" height="4.4" rx="0.6" fill="#4a4a4a"/><rect x="0.3" y="0.6" width="11.4" height="1.6" fill="#9a9a9a"/></svg>
<div class="t" style="left:20.6px;top:122.9px;">Disco local (J:)</div>
<svg class="abs" style="left:9.3px;top:136.8px" width="6" height="2.8" viewBox="0 0 12 5.6"><rect x="0.3" y="0.6" width="11.4" height="4.4" rx="0.6" fill="#4a4a4a"/><rect x="0.3" y="0.6" width="11.4" height="1.6" fill="#9a9a9a"/></svg>
<div class="t" style="left:17.3px;top:135.3px;">Disco local (J:)</div>
<svg class="abs" style="left:9.3px;top:149.3px" width="6" height="2.8" viewBox="0 0 12 5.6"><rect x="0.3" y="0.6" width="11.4" height="4.4" rx="0.6" fill="#4a4a4a"/><rect x="0.3" y="0.6" width="11.4" height="1.6" fill="#9a9a9a"/></svg>
<div class="t" style="left:17.3px;top:147.8px;">TOSHIBA 2TB (I:)</div>
<svg class="abs" style="left:8.9px;top:158.2px" width="6.8" height="6.4" viewBox="0 0 5.6 5.2"><rect x="1.6" y="0.3" width="3.6" height="2.8" fill="#4a9ae0"/><rect x="0.2" y="1.8" width="3.4" height="2.6" fill="#2d7fd0" stroke="#fff" stroke-width="0.3"/><rect x="1" y="4.5" width="2" height="0.5" fill="#555"/></svg>
<div class="t" style="left:17.3px;top:159.9px;">Red</div>
<div class="abs" style="left:53.9px;top:36.5px;width:5.8px;height:138.5px;background:#f0f0f0"></div>
<div class="abs" style="left:54.2px;top:110.8px;width:5.4px;height:55.8px;background:#cdcdcd"></div>
<svg class="abs" style="left:55.1px;top:38.6px" width="3.6" height="2.4" viewBox="0 0 3.6 2.4"><path d="M0.5 1.9l1.3-1.3 1.3 1.3" stroke="#555" stroke-width="0.5" fill="none"/></svg>
<svg class="abs" style="left:55.1px;top:170.6px" width="3.6" height="2.4" viewBox="0 0 3.6 2.4"><path d="M0.5 0.5l1.3 1.3 1.3-1.3" stroke="#555" stroke-width="0.5" fill="none"/></svg>
<div class="t" style="left:68.4px;top:40.7px;color:#4c607a">Nombre</div>
<div class="t" style="left:168.6px;top:40.7px;color:#4c607a">Fecha de modifica...</div>
<div class="t" style="left:215.0px;top:40.7px;color:#4c607a">Tipo</div>
<div class="t" style="left:261.3px;top:40.7px;color:#4c607a">Tamaño</div>
<svg class="abs" style="left:115.0px;top:36.8px" width="3" height="1.8" viewBox="0 0 3 1.8"><path d="M0.4 1.5l1.1-1.1 1.1 1.1" stroke="#8a8a8a" stroke-width="0.4" fill="none"/></svg>
<div class="abs" style="left:165.5px;top:36.8px;width:0.4px;height:10.4px;background:#e5e5e5"></div>
<div class="abs" style="left:211.7px;top:36.8px;width:0.4px;height:10.4px;background:#e5e5e5"></div>
<div class="abs" style="left:258.5px;top:36.8px;width:0.4px;height:10.4px;background:#e5e5e5"></div>
<div class="abs" style="left:289.3px;top:36.8px;width:0.4px;height:10.4px;background:#e5e5e5"></div>
<div class="abs" style="left:67.1px;top:48.8px;width:220.5px;height:7.8px;background:#cce8ff;"></div>
<svg class="abs" style="left:68.8px;top:50.4px" width="5" height="5" viewBox="0 0 10 10"><rect x="0.500" y="0.500" width="9" height="9" fill="#f4f8fc" stroke="#8fa3bb" stroke-width="0.800"/><rect x="1.800" y="1.800" width="6.400" height="4.400" fill="#5b9fe0"/><path d="M1.800 6.200l2-2 1.500 1.200 1.200-0.900 1.700 1.700z" fill="#2f6fb3"/></svg>
<div class="t" style="left:76.0px;top:51.5px;letter-spacing:-0.1px">Audeze LCD-X 7522511</div>
<div class="t g" style="left:168.6px;top:51.5px">20/03/2018 16:23</div>
<div class="t g" style="left:215.0px;top:51.5px">Archivo PNG</div>
<div class="t g" style="left:266.0px;width:20.4px;text-align:right;top:51.5px">88 KB</div>
<svg class="abs" style="left:68.1px;top:58.5px" width="6.400" height="5.200" viewBox="0 0 12.800 10.400"><rect x="4" y="0.400" width="8.400" height="9.600" fill="#fff" stroke="#9aa5ae" stroke-width="0.700"/><rect x="0.400" y="1" width="7.200" height="6.400" fill="#2e9a55"/><path d="M2.200 2.400l3.400 3.600M5.600 2.400l-3.400 3.600" stroke="#e9f7ee" stroke-width="1.100"/><rect x="6.400" y="5.400" width="5" height="4" fill="#7d93a8"/><rect x="1.500" y="7.600" width="4" height="1.800" fill="#57b877"/></svg>
<div class="t" style="left:76.0px;top:59.6px;letter-spacing:-0.1px">Audeze LCD-X</div>
<div class="t g" style="left:168.6px;top:59.6px">01/09/2018 13:17</div>
<div class="t g" style="left:215.0px;top:59.6px">Archivo de valores...</div>
<div class="t g" style="left:266.0px;width:20.4px;text-align:right;top:59.6px">10 KB</div>
<svg class="abs" style="left:68.8px;top:66.1px" width="5" height="6" viewBox="0 0 8.300 10"><path d="M0.800 0.500h4.500l2.200 2.200v6.800h-6.700z" fill="#fff" stroke="#9a9aa8" stroke-width="0.700"/></svg>
<div class="t" style="left:76.0px;top:67.6px;letter-spacing:-0.1px">Audeze LCD-X.json</div>
<div class="t g" style="left:168.6px;top:67.6px">01/09/2018 13:16</div>
<div class="t g" style="left:215.0px;top:67.6px">Archivo JSON</div>
<div class="t g" style="left:266.0px;width:20.4px;text-align:right;top:67.6px">13 KB</div>
<svg class="abs" style="left:68.1px;top:74.6px" width="6.400" height="5.200" viewBox="0 0 12.800 10.400"><rect x="4" y="0.400" width="8.400" height="9.600" fill="#fff" stroke="#9aa5ae" stroke-width="0.700"/><rect x="0.400" y="1" width="7.200" height="6.400" fill="#2e9a55"/><path d="M2.200 2.400l3.400 3.600M5.600 2.400l-3.400 3.600" stroke="#e9f7ee" stroke-width="1.100"/><rect x="6.400" y="5.400" width="5" height="4" fill="#7d93a8"/><rect x="1.500" y="7.600" width="4" height="1.800" fill="#57b877"/></svg>
<div class="t" style="left:76.0px;top:75.7px;letter-spacing:-0.1px">Audeze LCD-X1 procesado</div>
<div class="t g" style="left:168.6px;top:75.7px">01/09/2018 13:20</div>
<div class="t g" style="left:215.0px;top:75.7px">Archivo de valores...</div>
<div class="t g" style="left:266.0px;width:20.4px;text-align:right;top:75.7px">10 KB</div>
<svg class="abs" style="left:68.1px;top:82.7px" width="6.400" height="5.200" viewBox="0 0 12.800 10.400"><rect x="4" y="0.400" width="8.400" height="9.600" fill="#fff" stroke="#9aa5ae" stroke-width="0.700"/><rect x="0.400" y="1" width="7.200" height="6.400" fill="#2e9a55"/><path d="M2.200 2.400l3.400 3.600M5.600 2.400l-3.400 3.600" stroke="#e9f7ee" stroke-width="1.100"/><rect x="6.400" y="5.400" width="5" height="4" fill="#7d93a8"/><rect x="1.500" y="7.600" width="4" height="1.800" fill="#57b877"/></svg>
<div class="t" style="left:76.0px;top:83.8px;letter-spacing:-0.1px">Audeze LCD-X1</div>
<div class="t g" style="left:168.6px;top:83.8px">01/09/2018 13:16</div>
<div class="t g" style="left:215.0px;top:83.8px">Archivo de valores...</div>
<div class="t g" style="left:266.0px;width:20.4px;text-align:right;top:83.8px">19 KB</div>
<svg class="abs" style="left:68.8px;top:90.3px" width="5" height="6" viewBox="0 0 8.300 10"><path d="M0.800 0.500h4.500l2.200 2.200v6.800h-6.700z" fill="#fff" stroke="#9a9aa8" stroke-width="0.700"/></svg>
<div class="t" style="left:76.0px;top:91.8px;letter-spacing:-0.1px">Audeze LCD-X1.json</div>
<div class="t g" style="left:168.6px;top:91.8px">01/09/2018 13:16</div>
<div class="t g" style="left:215.0px;top:91.8px">Archivo JSON</div>
<div class="t g" style="left:266.0px;width:20.4px;text-align:right;top:91.8px">15 KB</div>
<svg class="abs" style="left:68.1px;top:98.8px" width="6.400" height="5.200" viewBox="0 0 12.800 10.400"><rect x="4" y="0.400" width="8.400" height="9.600" fill="#fff" stroke="#9aa5ae" stroke-width="0.700"/><rect x="0.400" y="1" width="7.200" height="6.400" fill="#2e9a55"/><path d="M2.200 2.400l3.400 3.600M5.600 2.400l-3.400 3.600" stroke="#e9f7ee" stroke-width="1.100"/><rect x="6.400" y="5.400" width="5" height="4" fill="#7d93a8"/><rect x="1.500" y="7.600" width="4" height="1.800" fill="#57b877"/></svg>
<div class="t" style="left:76.0px;top:99.9px;letter-spacing:-0.1px">Audeze LCD-X1a</div>
<div class="t g" style="left:168.6px;top:99.9px">01/09/2018 13:18</div>
<div class="t g" style="left:215.0px;top:99.9px">Archivo de valores...</div>
<div class="t g" style="left:266.0px;width:20.4px;text-align:right;top:99.9px">19 KB</div>
<svg class="abs" style="left:68.1px;top:106.9px" width="6.400" height="5.200" viewBox="0 0 12.800 10.400"><rect x="4" y="0.400" width="8.400" height="9.600" fill="#fff" stroke="#9aa5ae" stroke-width="0.700"/><rect x="0.400" y="1" width="7.200" height="6.400" fill="#2e9a55"/><path d="M2.200 2.400l3.400 3.600M5.600 2.400l-3.400 3.600" stroke="#e9f7ee" stroke-width="1.100"/><rect x="6.400" y="5.400" width="5" height="4" fill="#7d93a8"/><rect x="1.500" y="7.600" width="4" height="1.800" fill="#57b877"/></svg>
<div class="t" style="left:76.0px;top:108.0px;letter-spacing:-0.1px">Audeze LCD-Xa</div>
<div class="t g" style="left:168.6px;top:108.0px">01/09/2018 13:18</div>
<div class="t g" style="left:215.0px;top:108.0px">Archivo de valores...</div>
<div class="t g" style="left:266.0px;width:20.4px;text-align:right;top:108.0px">18 KB</div>
<svg class="abs" style="left:68.6px;top:114.5px" width="5.400" height="6" viewBox="0 0 9 10"><path d="M1.800 0.500h4.400l2.200 2.200v6.800h-6.600z" fill="#fff" stroke="#a9a9a9" stroke-width="0.600"/><rect x="0.200" y="1" width="6" height="3.200" fill="#d6211d"/><path d="M3 8.600c1.200-1.400 2-3 2.200-4.200M3.200 8.400c1.400-.6 2.800-.8 4-.6" stroke="#d6211d" stroke-width="0.800" fill="none"/></svg>
<div class="t" style="left:76.0px;top:116.0px;letter-spacing:-0.1px">AudezeLCDX</div>
<div class="t g" style="left:168.6px;top:116.0px">16/04/2018 0:00</div>
<div class="t g" style="left:215.0px;top:116.0px">Adobe Acrobat D...</div>
<div class="t g" style="left:266.0px;width:20.4px;text-align:right;top:116.0px">97 KB</div>
<svg class="abs" style="left:68.6px;top:122.6px" width="5.400" height="6" viewBox="0 0 9 10"><path d="M1.800 0.500h4.400l2.200 2.200v6.800h-6.600z" fill="#fff" stroke="#a9a9a9" stroke-width="0.600"/><rect x="0.200" y="1" width="6" height="3.200" fill="#d6211d"/><path d="M3 8.600c1.200-1.400 2-3 2.200-4.200M3.200 8.400c1.400-.6 2.800-.8 4-.6" stroke="#d6211d" stroke-width="0.800" fill="none"/></svg>
<div class="t" style="left:76.0px;top:124.1px;letter-spacing:-0.1px">FocalClearesA18BQE000007</div>
<div class="t g" style="left:168.6px;top:124.1px">16/04/2018 0:00</div>
<div class="t g" style="left:215.0px;top:124.1px">Adobe Acrobat D...</div>
<div class="t g" style="left:266.0px;width:20.4px;text-align:right;top:124.1px">98 KB</div>
<svg class="abs" style="left:68.6px;top:130.6px" width="5.400" height="6" viewBox="0 0 9 10"><path d="M1.800 0.500h4.400l2.200 2.200v6.800h-6.600z" fill="#fff" stroke="#a9a9a9" stroke-width="0.600"/><rect x="0.200" y="1" width="6" height="3.200" fill="#d6211d"/><path d="M3 8.600c1.200-1.400 2-3 2.200-4.200M3.200 8.400c1.400-.6 2.800-.8 4-.6" stroke="#d6211d" stroke-width="0.800" fill="none"/></svg>
<div class="t" style="left:76.0px;top:132.1px;letter-spacing:-0.1px">StaxSR009SZ91278</div>
<div class="t g" style="left:168.6px;top:132.1px">13/05/2018 12:52</div>
<div class="t g" style="left:215.0px;top:132.1px">Adobe Acrobat D...</div>
<div class="t g" style="left:266.0px;width:20.4px;text-align:right;top:132.1px">96 KB</div>
<svg class="abs" style="left:68.6px;top:138.7px" width="5.400" height="6" viewBox="0 0 9 10"><path d="M1.800 0.500h4.400l2.200 2.200v6.800h-6.600z" fill="#fff" stroke="#a9a9a9" stroke-width="0.600"/><rect x="0.200" y="1" width="6" height="3.200" fill="#d6211d"/><path d="M3 8.600c1.200-1.400 2-3 2.200-4.200M3.200 8.400c1.400-.6 2.800-.8 4-.6" stroke="#d6211d" stroke-width="0.800" fill="none"/></svg>
<div class="t" style="left:76.0px;top:140.2px;letter-spacing:-0.1px">StaxSR207SB2217</div>
<div class="t g" style="left:168.6px;top:140.2px">18/05/2018 20:35</div>
<div class="t g" style="left:215.0px;top:140.2px">Adobe Acrobat D...</div>
<div class="t g" style="left:266.0px;width:20.4px;text-align:right;top:140.2px">97 KB</div>
<div class="abs" style="left:0;top:175.0px;width:363.2px;height:29.3px;background:#f0f0f0"></div>
<div class="t" style="left:50.6px;top:181.7px">Nombre:</div>
<div class="abs" style="left:70.0px;top:179.0px;width:210.4px;height:8.4px;box-sizing:border-box;border:0.5px solid #9a9a9a;background:#fff"></div>
<div class="t" style="left:72.0px;top:181.7px">Audeze LCD-X 7522511</div>
<svg class="abs" style="left:275.0px;top:182.2px" width="3.4" height="2.2" viewBox="0 0 3.4 2.2"><path d="M0.4 0.4l1.3 1.3 1.3-1.3" stroke="#444" stroke-width="0.5" fill="none"/></svg>
<div class="abs" style="left:283.6px;top:179.0px;width:73.2px;height:8.4px;box-sizing:border-box;border:0.5px solid #c2c2c2;background:#e6e6e6"></div>
<div class="t" style="left:285.8px;top:181.7px">All Files (*.*)</div>
<svg class="abs" style="left:351.0px;top:182.2px" width="3.4" height="2.2" viewBox="0 0 3.4 2.2"><path d="M0.4 0.4l1.3 1.3 1.3-1.3" stroke="#444" stroke-width="0.5" fill="none"/></svg>
<div class="abs" style="left:285.3px;top:190.0px;width:32.7px;height:8.5px;box-sizing:border-box;border:0.8px solid #3a8ee0;background:#e3e3e3;text-align:center;line-height:7.6px">Abrir</div>
<div class="abs" style="left:323.0px;top:190.0px;width:33.8px;height:8.5px;box-sizing:border-box;border:0.5px solid #b9b9b9;background:#e3e3e3;text-align:center;line-height:7.4px">Cancelar</div>
<svg class="abs" style="left:359.0px;top:199.6px" width="4" height="4" viewBox="0 0 4 4"><g fill="#bdbdbd"><rect x="2.8" y="0.4" width="0.7" height="0.7"/><rect x="2.8" y="1.6" width="0.7" height="0.7"/><rect x="2.8" y="2.8" width="0.7" height="0.7"/><rect x="1.6" y="1.6" width="0.7" height="0.7"/><rect x="1.6" y="2.8" width="0.7" height="0.7"/><rect x="0.4" y="2.8" width="0.7" height="0.7"/></g></svg>
</div>
<div id="taskbar">
<svg class="abs" style="left:6.1px;top:4.9px" width="6.4" height="6.4" viewBox="0 0 10 10"><g fill="#fff"><path d="M0 1.4l4.300-0.600v3.900h-4.300z"/><path d="M4.900 0.700l5.100-0.700v4.700h-5.100z"/><path d="M0 5.400h4.300v3.900l-4.300-0.600z"/><path d="M4.900 5.400h5.100v4.600l-5.100-0.700z"/></g></svg>
<div class="abs" style="left:18.2px;top:0.2px;width:132.4px;height:15.2px;background:#f2f2f2"></div>
<svg class="abs" style="left:21.6px;top:3.6px" width="9" height="9" viewBox="0 0 9 9"><circle cx="4.500" cy="4.500" r="3.400" fill="none" stroke="#1a1a1a" stroke-width="1.050"/></svg>
<div class="t" style="left:33.800px;top:5.900px;font-size:5.650px;color:#484848;letter-spacing:-0.050px">Escribe aquí para buscar</div>
<svg class="abs" style="left:140.800px;top:4.400px" width="4.400" height="7" viewBox="0 0 4.400 7"><rect x="1.300" y="0.400" width="1.800" height="3.600" rx="0.900" fill="none" stroke="#333" stroke-width="0.600"/><path d="M0.500 3.200c0 2.400 3.400 2.400 3.400 0M2.200 5v1.400" fill="none" stroke="#333" stroke-width="0.600"/></svg>
<svg class="abs" style="left:156.900px;top:4.800px" width="7" height="6.400" viewBox="0 0 7 6.400"><g fill="none" stroke="#fff" stroke-width="0.650"><rect x="0.400" y="1.200" width="3.800" height="4"/><path d="M5.400 0.600v1.600M5.400 3v2.800M4.600 1.400h1.600M4.600 5h1.600"/></g></svg>
<svg class="abs" style="left:175.1px;top:3.8px" width="9" height="9" viewBox="0 0 16 16"><path d="M2 9.500C2.500 4 6 2 9 2c3.500 0 5.500 2.500 5.500 6v1.500H6.500c.3 2 2 2.800 3.800 2.800 1.400 0 2.600-.4 3.700-1v2.700C12.800 14.700 11.300 15 9.700 15 6 15 3.800 12.800 3.800 9.500 3.800 7.600 4.800 6 6.300 5.100 4.500 5.800 2.800 7.400 2 9.500zM6.600 7.400h4.800C11.300 6 10.400 5 9 5 7.700 5 6.800 6 6.600 7.400z" fill="#2f8fe6"/></svg>
<div class="abs" style="left:191.0px;top:14.7px;width:15.0px;height:0.7px;background:#7fb2de"></div>
<svg class="abs" style="left:194.0px;top:3.8px" width="9" height="9" viewBox="0 0 16 16"><circle cx="8" cy="8" r="7" fill="#e84335"/><path d="M8 8L1.900 4.500A7 7 0 0 0 5 14.300z" fill="#34a853"/><path d="M8 8l-3 6.300A7 7 0 0 0 14.600 5.500z" fill="#fbbc05"/><path d="M1.900 4.500A7 7 0 0 1 14.600 5.500H8z" fill="#e84335"/><circle cx="8" cy="8" r="3.200" fill="#fff"/><circle cx="8" cy="8" r="2.500" fill="#4285f4"/></svg>
<svg class="abs" style="left:212.9px;top:3.8px" width="9" height="9" viewBox="0 0 16 16"><circle cx="8" cy="8" r="6.800" fill="#ff7a18"/><circle cx="8.400" cy="7.400" r="3.600" fill="#3b5bdb"/><path d="M1.400 7c1-3 3-4.600 5-4.800C5 3.600 5 5 6 6 4.500 6.500 4 8 4.600 9.600 5.400 11.600 8 12.400 10 11.400c-1 2-3.500 3-6 2C2 12.400 1 9.800 1.400 7z" fill="#ffb000"/></svg>
<svg class="abs" style="left:231.8px;top:3.8px" width="9" height="9" viewBox="0 0 16 16"><circle cx="8" cy="8" r="6.400" fill="#f2672e"/><circle cx="8" cy="8" r="2.600" fill="#3a2418"/><path d="M8 8l5-5" stroke="#ffb27a" stroke-width="1.200"/></svg>
<svg class="abs" style="left:250.7px;top:3.8px" width="9" height="9" viewBox="0 0 16 16"><circle cx="8" cy="8" r="6.800" fill="#1c4f82"/><circle cx="10.400" cy="6" r="2.300" fill="none" stroke="#dfe9f3" stroke-width="1.200"/><path d="M1.600 9l4.400 1.800" stroke="#dfe9f3" stroke-width="1.600"/><circle cx="6" cy="10.800" r="1.700" fill="#dfe9f3"/></svg>
<svg class="abs" style="left:269.6px;top:3.8px" width="9" height="9" viewBox="0 0 16 16"><rect x="3" y="1.500" width="10" height="13" fill="#f4f4f4"/><rect x="4.500" y="4.500" width="7" height="1" fill="#4a7fc0"/><rect x="4.500" y="6.800" width="7" height="1" fill="#4a7fc0"/><circle cx="11" cy="10.500" r="3" fill="#d9332b"/><rect x="3" y="1.500" width="10" height="1.800" fill="#3c6eb4"/></svg>
<svg class="abs" style="left:288.5px;top:3.8px" width="9" height="9" viewBox="0 0 16 16"><rect x="1.500" y="1.500" width="13" height="13" rx="1.500" fill="#c8171a"/><path d="M4 12c2.500-2.500 4-6 4-8.500M4.500 11.500c2.500-1.200 5-1.700 7.500-1.500M8 4c.5 3 2 5 4 6" stroke="#fff" stroke-width="1" fill="none"/></svg>
<div class="abs" style="left:304.4px;top:14.7px;width:15.0px;height:0.7px;background:#7fb2de"></div>
<svg class="abs" style="left:307.4px;top:3.8px" width="9" height="9" viewBox="0 0 16 16"><path d="M1.500 3.500h5l1.200 1.500h6.800v8.500h-13z" fill="#f6c94c"/><rect x="1.500" y="6.500" width="13" height="7" fill="#ffe08a"/><rect x="4.500" y="9.500" width="7" height="4" fill="#4aa3e8"/></svg>
<svg class="abs" style="left:326.3px;top:3.8px" width="9" height="9" viewBox="0 0 16 16"><path d="M8 1.500l3.600 10H4.400z" fill="#f58a1f"/><path d="M6.600 5.500h2.800l.9 2.500H5.700z" fill="#fff"/><path d="M2.500 11.500h11l1 3h-13z" fill="#f58a1f"/></svg>
<svg class="abs" style="left:345.2px;top:3.8px" width="9" height="9" viewBox="0 0 16 16"><circle cx="8" cy="8" r="6.800" fill="#4cb050"/><path d="M5.500 4.500v4.500a2.500 2.500 0 0 0 5 0V4.500" stroke="#fff" stroke-width="1.800" fill="none"/></svg>
<svg class="abs" style="left:364.1px;top:3.8px" width="9" height="9" viewBox="0 0 16 16"><rect x="4.500" y="6" width="7" height="7.500" rx="1" fill="#f39b12"/><path d="M6 6V4.500a2 2 0 0 1 4 0V6" stroke="#f39b12" stroke-width="1.200" fill="none"/><rect x="6.500" y="8.500" width="3" height="2.500" fill="#111"/></svg>
<svg class="abs" style="left:383.0px;top:3.8px" width="9" height="9" viewBox="0 0 16 16"><circle cx="8" cy="8" r="6.800" fill="#2e8be0"/><circle cx="8" cy="8" r="4.600" fill="#6db8f5"/><path d="M8 3.500v9" stroke="#fff" stroke-width="1.600"/></svg>
<svg class="abs" style="left:401.9px;top:3.8px" width="9" height="9" viewBox="0 0 16 16"><path d="M3 2l2.800 3h4.400L13 2l.8 6.500L8 14.500 2.200 8.500z" fill="#f2f2f2"/><circle cx="6" cy="8" r="1" fill="#111"/><circle cx="10" cy="8" r="1" fill="#111"/></svg>
<svg class="abs" style="left:420.8px;top:3.8px" width="9" height="9" viewBox="0 0 16 16"><path d="M2 9.500l4-3.500 3 1.500 5-2-2.500 4.500-4 1.500-2-.8z" fill="#8d8f7d"/><path d="M2 6l3 1" stroke="#777" stroke-width="1"/></svg>
<svg class="abs" style="left:439.7px;top:3.8px" width="9" height="9" viewBox="0 0 16 16"><circle cx="8" cy="8.300" r="6.600" fill="#2a6fc4"/><path d="M3 10.500l5-3 5 3v3H3z" fill="#eef2f7"/><path d="M2.500 5.500c2-3 6.500-4 10-1.500-3-.5-5 .5-6 2.500-1.500-1-3-1.200-4-1z" fill="#9cc5f0"/></svg>
<svg class="abs" style="left:458.6px;top:3.8px" width="9" height="9" viewBox="0 0 16 16"><circle cx="8" cy="8" r="6.600" fill="#b57edc"/><circle cx="8" cy="8" r="4.400" fill="#8b4fc0"/><path d="M6 5.500h4M6 8h4M6 10.500h2.500" stroke="#eee" stroke-width="1"/></svg>
<div class="abs" style="left:475.7px;top:14.7px;width:14.3px;height:0.7px;background:#7fb2de"></div>
<svg class="abs" style="left:477.5px;top:3.8px" width="9" height="9" viewBox="0 0 16 16"><g fill="#fff"><path d="M1.200 5.600l2.200-2.200 2.200 2.200-2.200 2.200z"/><path d="M5.800 5.600L8 3.400l2.200 2.200L8 7.800z"/><path d="M10.400 5.600l2.200-2.200 2.200 2.200-2.200 2.200z"/><path d="M5.800 10.200L8 8l2.200 2.200L8 12.400z"/></g></svg>
<svg class="abs" style="left:496.4px;top:3.8px" width="9" height="9" viewBox="0 0 16 16"><path d="M3.500 1.500h6.500l3 3v10h-9.500z" fill="#f4f4f4"/><path d="M10 1.500v3h3z" fill="#bdbdbd"/></svg>
<div class="abs" style="left:511.8px;top:14.7px;width:17.0px;height:0.7px;background:#7fb2de"></div>
<svg class="abs" style="left:515.3px;top:3.8px" width="9" height="9" viewBox="0 0 16 16"><ellipse cx="8" cy="9" rx="6.500" ry="4.800" fill="#cfd8dc"/><circle cx="5" cy="8.500" r="1.100" fill="#e53935"/><circle cx="7.500" cy="6.800" r="1.100" fill="#43a047"/><circle cx="10.500" cy="7.500" r="1.100" fill="#1e88e5"/><path d="M10 10l4.500-7 1 .7-4 7.300z" fill="#b0bec5"/></svg>
<div class="abs" style="left:528.8px;top:0.2px;width:18.0px;height:15.2px;background:#3b3b3b"></div>
<div class="abs" style="left:528.8px;top:14.7px;width:18.0px;height:0.7px;background:#7fb2de"></div>
<svg class="abs" style="left:533.6px;top:3.8px" width="9" height="9" viewBox="0 0 16 16"><rect x="0" y="0" width="16" height="16" fill="#0a0a0a"/><path d="M1 1h8l-8 8z" fill="#7a2a10"/><rect x="1.200" y="6.500" width="4" height="9" fill="#ffe100"/><rect x="6" y="9" width="4" height="6.500" fill="#ffd000"/><rect x="10.800" y="3" width="4" height="12.500" fill="#ffe100"/></svg>
<svg class="abs" style="left:650.800px;top:4.600px" width="7.500" height="7" viewBox="0 0 7.500 7"><g fill="none" stroke="#fff" stroke-width="0.500"><circle cx="2.600" cy="2.600" r="1.100"/><path d="M0.600 6.400c0-2.600 4-2.600 4 0"/><path d="M5 1.200c1.500 0 1.500 1.800 0.300 2.200"/></g></svg>
<svg class="abs" style="left:665.800px;top:5.800px" width="5.600" height="4" viewBox="0 0 5.600 4"><path d="M0.600 3.200l2.200-2.200 2.200 2.200" fill="none" stroke="#fff" stroke-width="0.550"/></svg>
<svg class="abs" style="left:675.600px;top:5px" width="5.600" height="5.600" viewBox="0 0 5.600 5.600"><g fill="none" stroke="#fff" stroke-width="0.450"><rect x="1.400" y="1" width="3.600" height="2.600"/><path d="M0.400 4.800h4.800M3.200 3.600v1.200"/></g></svg>
<svg class="abs" style="left:683.800px;top:5px" width="6.400" height="5.600" viewBox="0 0 6.400 5.600"><path d="M0.400 2h1.200l1.400-1.300v4.200L1.600 3.600H0.400z" fill="#fff"/><path d="M3.900 1.600c.8.700.8 1.700 0 2.400M4.900 0.800c1.400 1.200 1.400 2.800 0 4" fill="none" stroke="#fff" stroke-width="0.450"/></svg>
<div class="t" style="left:690.200px;width:30px;text-align:center;top:3px;font-size:4.500px;color:#fff;letter-spacing:-0.120px">14:53</div>
<div class="t" style="left:690.200px;width:30px;text-align:center;top:10.700px;font-size:4.500px;color:#fff;letter-spacing:-0.120px">01/09/2018</div>
<svg class="abs" style="left:723px;top:4px" width="8.500" height="8" viewBox="0 0 8.500 8"><path d="M0.500 0.600h6v4.400h-3l-1.600 1.400v-1.400h-1.400z" fill="#fff"/><circle cx="6" cy="5.400" r="2.100" fill="#111" stroke="#fff" stroke-width="0.450"/></svg>
<div class="t" style="left:728.100px;top:3.500px;font-size:3.600px;color:#fff">2</div>
</div>
</div></body></html>
